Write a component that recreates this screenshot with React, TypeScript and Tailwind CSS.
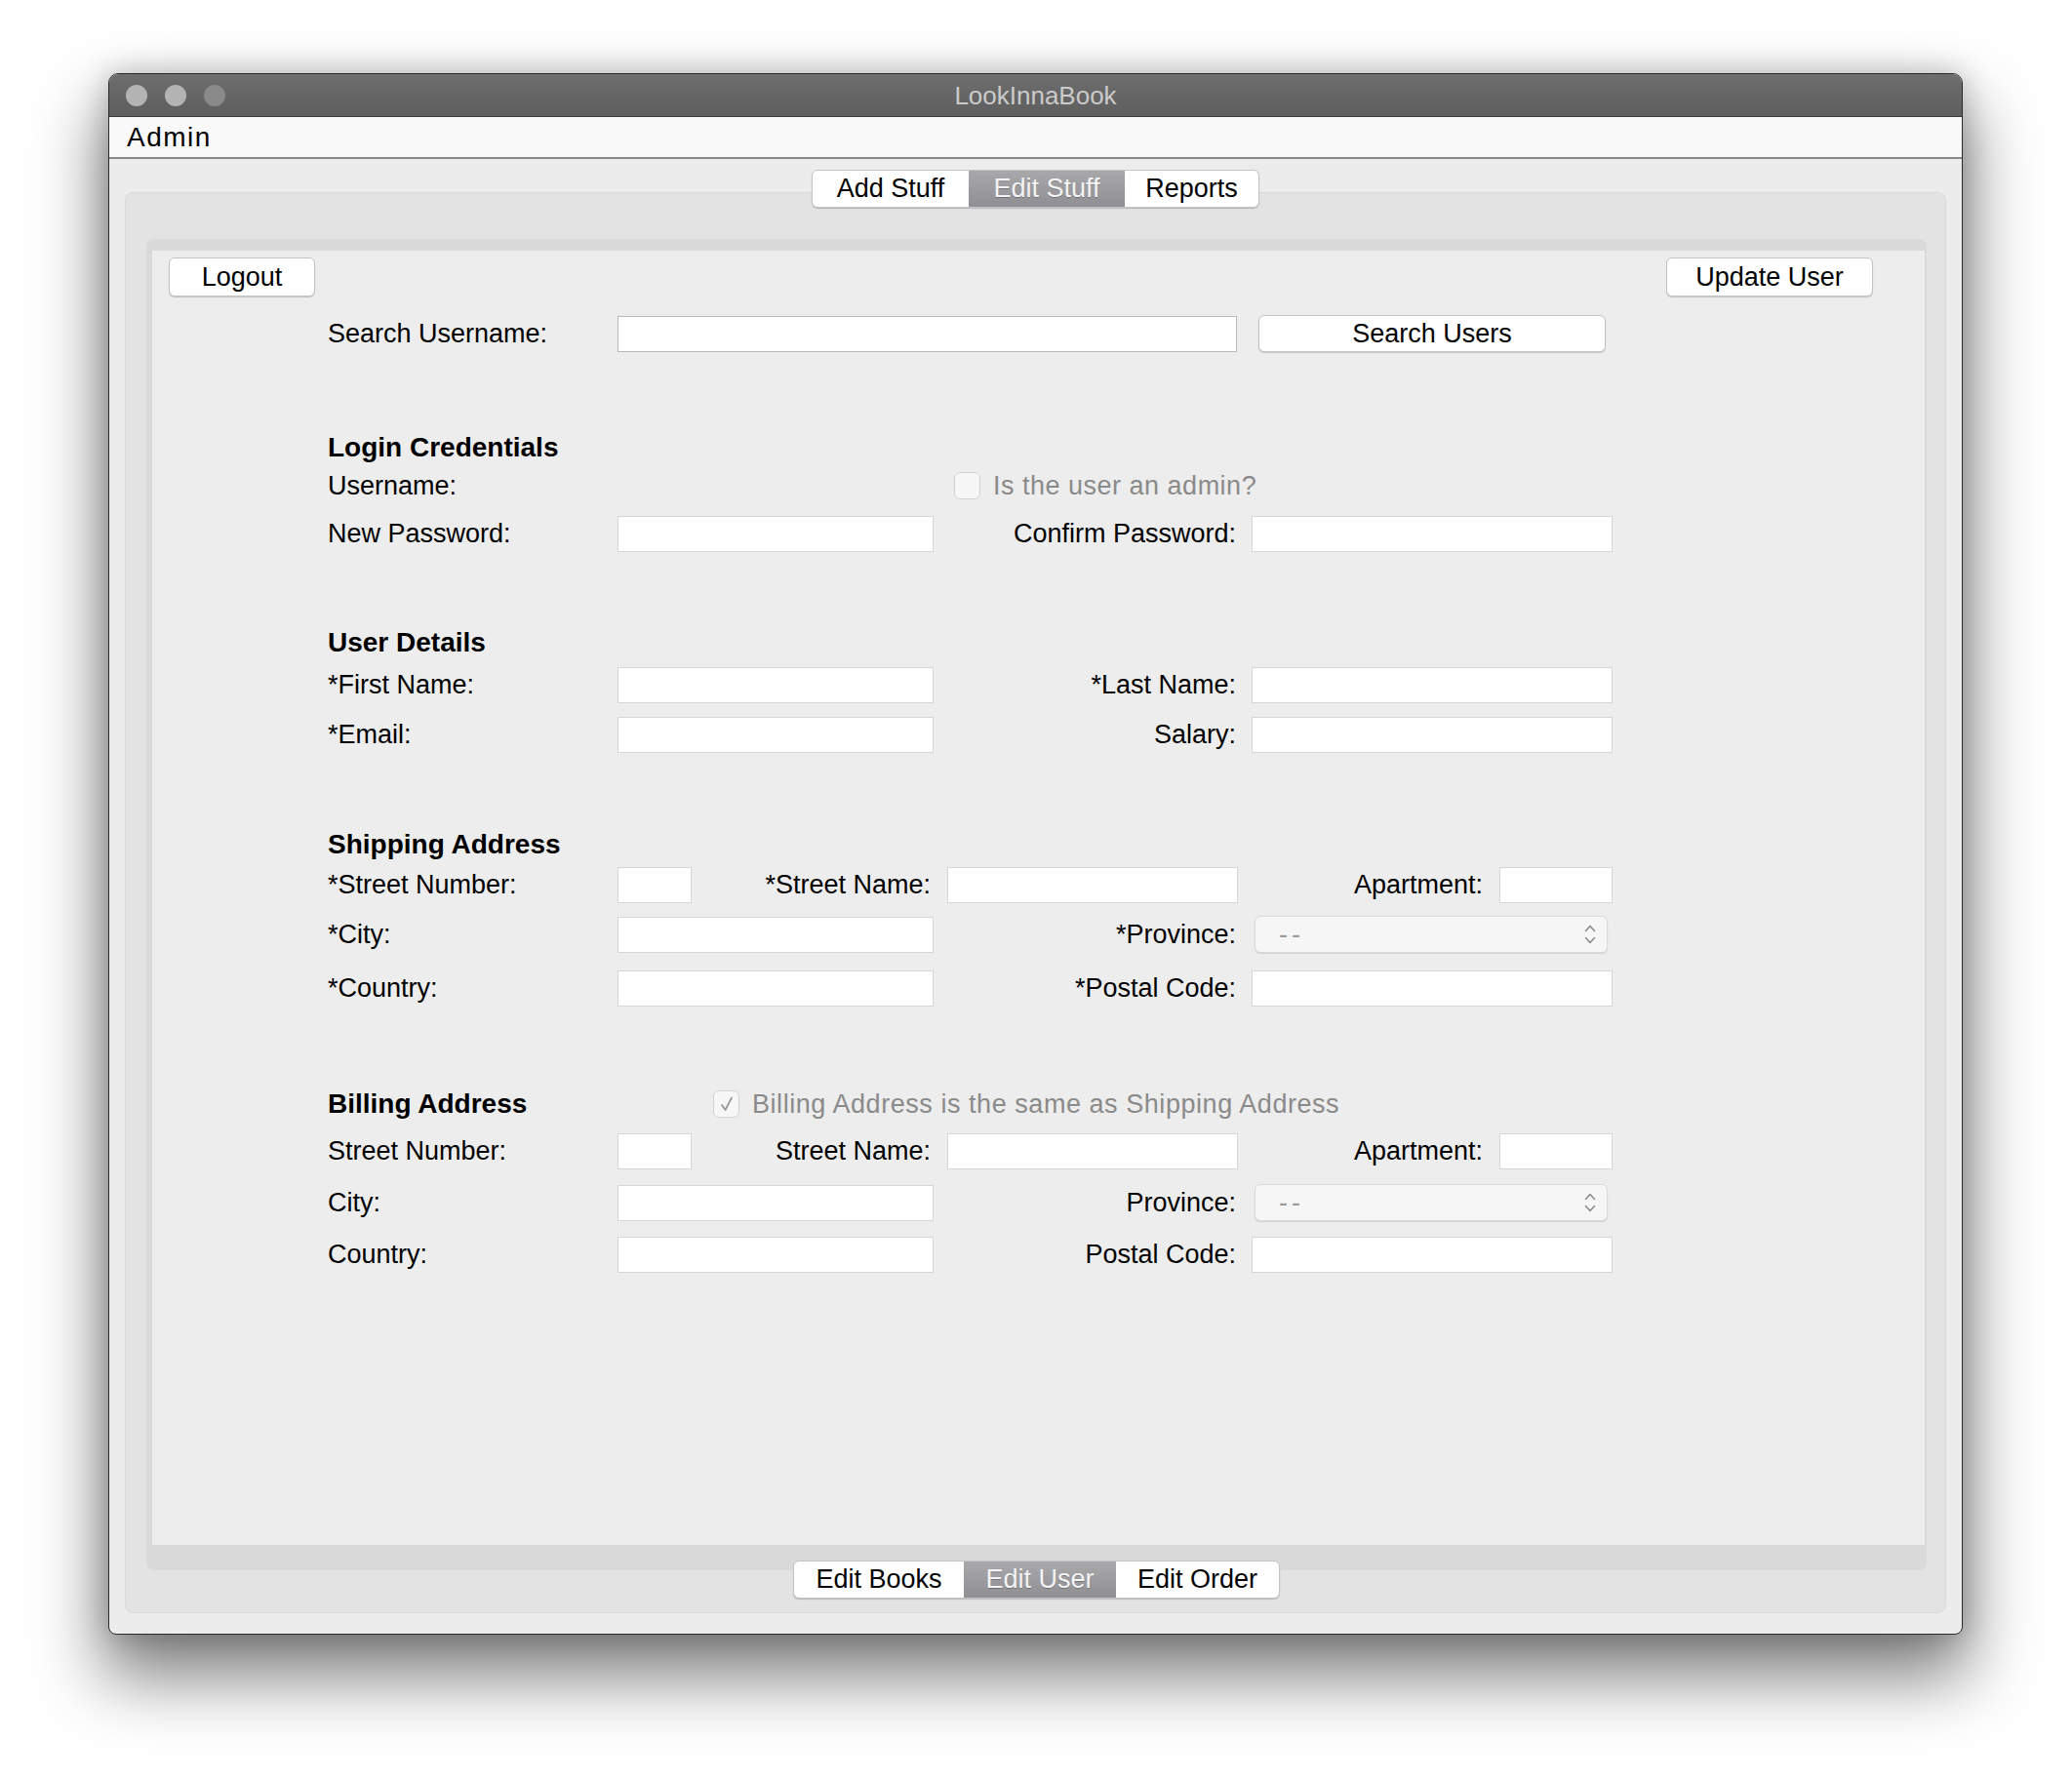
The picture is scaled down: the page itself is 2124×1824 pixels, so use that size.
import React from 'react';

// Java Swing "Aqua" look: LookInnaBook admin window, Edit Stuff > Edit User

function Field({ w, dark }: { w: string; dark?: boolean }) {
  return (
    <div
      className={`${w} h-[37px] shrink-0 bg-white border ${
        dark ? 'border-[#b9b9b9]' : 'border-[#d6d6d6]'
      }`}
    />
  );
}

function Combo() {
  return (
    <div className="w-[362px] h-[38px] shrink-0 ml-[19px] flex items-center justify-between pl-[24px] pr-[10px] rounded-[6px] bg-[#f6f6f6] border border-[#dadada] shadow-[0_1px_1px_rgba(0,0,0,0.12)]">
      <span className="text-[#9a9a9a] tracking-[4px]">--</span>
      <svg width="14" height="24" viewBox="0 0 14 24" fill="none" stroke="#8c8c8c" strokeWidth="1.6" strokeLinecap="round" strokeLinejoin="round">
        <path d="M2.5 8.5 L7 3.5 L11.5 8.5" />
        <path d="M2.5 15.5 L7 20.5 L11.5 15.5" />
      </svg>
    </div>
  );
}

function CheckBox({ checked }: { checked?: boolean }) {
  return (
    <div className="w-[27px] h-[28px] shrink-0 rounded-[6px] border border-[#d2d2d2] bg-[#f7f7f7] flex items-center justify-center">
      {checked && (
        <svg width="16" height="18" viewBox="0 0 16 18" fill="none" stroke="#9a9a9a" strokeWidth="1.8" strokeLinecap="round" strokeLinejoin="round">
          <path d="M3 10 L6.5 15 L13 2.5" />
        </svg>
      )}
    </div>
  );
}

function Button({ label, w }: { label: string; w: string }) {
  return (
    <div
      className={`${w} h-[40px] shrink-0 flex items-center justify-center bg-white rounded-[6px] border border-[#c3c3c3] shadow-[0_1px_1px_rgba(0,0,0,0.18)]`}
    >
      {label}
    </div>
  );
}

function Segments({ items, active }: { items: [string, string][]; active: number }) {
  return (
    <div className="flex h-[39px] rounded-[6px] border border-[#c4c4c4] bg-white overflow-hidden shadow-[0_1px_1px_rgba(0,0,0,0.2)]">
      {items.map(([label, w], i) => (
        <div
          key={label}
          className={`${w} flex items-center justify-center ${
            i === active
              ? 'bg-gradient-to-b from-[#a9a9ac] to-[#8f8f93] text-[#f4f4f4] [text-shadow:0_1px_0_rgba(0,0,0,0.25)]'
              : 'text-black'
          }`}
        >
          {label}
        </div>
      ))}
    </div>
  );
}

function Label({ children }: { children: React.ReactNode }) {
  return <span className="w-[297px] shrink-0">{children}</span>;
}

function Heading({ mt, children }: { mt: string; children: React.ReactNode }) {
  return (
    <div className={`h-[30px] flex items-center font-bold text-[28px] ${mt}`}>{children}</div>
  );
}

function TwoCol({
  mt,
  left,
  right,
  rightEl,
}: {
  mt: string;
  left: string;
  right: string;
  rightEl?: React.ReactNode;
}) {
  return (
    <div className={`h-[38px] flex items-center ${mt}`}>
      <Label>{left}</Label>
      <Field w="w-[324px]" />
      <span className="w-[310px] shrink-0 text-right">{right}</span>
      {rightEl ?? (
        <div className="ml-[16px]">
          <Field w="w-[370px]" />
        </div>
      )}
    </div>
  );
}

function StreetRow({ mt, req }: { mt: string; req: boolean }) {
  return (
    <div className={`h-[38px] flex items-center ${mt}`}>
      <Label>{req ? '*Street Number:' : 'Street Number:'}</Label>
      <Field w="w-[76px]" />
      <span className="w-[262px] shrink-0 text-right pr-[17px]">
        {req ? '*Street Name:' : 'Street Name:'}
      </span>
      <Field w="w-[298px]" />
      <span className="w-[268px] shrink-0 text-right pr-[17px]">Apartment:</span>
      <Field w="w-[116px]" />
    </div>
  );
}

export default function App() {
  return (
    <div className="w-[2124px] h-[1824px] bg-white pl-[111px] pt-[75px] font-['Liberation_Sans',Arial,sans-serif] text-[27px] leading-none text-black">
      <div className="w-[1901px] h-[1601px] flex flex-col rounded-t-[10px] rounded-b-[8px] border border-[#2a2a2a] bg-[#ececec] overflow-hidden shadow-[0_38px_70px_6px_rgba(0,0,0,0.5),0_0_30px_rgba(0,0,0,0.22)]">
        {/* title bar */}
        <div className="h-[44px] shrink-0 relative flex items-center bg-gradient-to-b from-[#6e6e6e] to-[#5e5e5e] border-b border-[#3c3c3c]">
          <div className="flex items-center gap-[18px] pl-[17px]">
            <div className="w-[22px] h-[22px] rounded-full bg-[#b3b3b3]" />
            <div className="w-[22px] h-[22px] rounded-full bg-[#b3b3b3]" />
            <div className="w-[22px] h-[22px] rounded-full bg-[#8a8a8a]" />
          </div>
          <div className="absolute inset-0 flex items-center justify-center text-[26px] text-[#cbcbcb]">
            LookInnaBook
          </div>
        </div>

        {/* menu bar */}
        <div className="h-[43px] shrink-0 flex items-center pl-[18px] bg-[#f9f9f9] border-b-2 border-[#8a8a8a] text-[28px] tracking-[1.5px]">
          Admin
        </div>

        {/* body */}
        <div className="flex-1 flex flex-col px-[16px] pt-[11px] pb-[21px]">
          <div className="h-[38px] flex justify-center relative z-10">
            <Segments
              active={1}
              items={[
                ['Add Stuff', 'w-[160px]'],
                ['Edit Stuff', 'w-[160px]'],
                ['Reports', 'w-[137px]'],
              ]}
            />
          </div>

          {/* outer tab panel */}
          <div className="flex-1 -mt-[15px] flex flex-col rounded-[8px] bg-[#e3e3e3] border border-[#dadada] pt-[47px] pl-[21px] pr-[19px] pb-[13px]">
            {/* inner tab panel */}
            <div className="flex-1 flex flex-col rounded-[7px] bg-[#dadada] pt-[12px] pl-[6px] pr-[2px] pb-[26px]">
              <div className="flex-1 flex flex-col bg-[#ededed] pt-[7px]">
                <div className="flex justify-between pl-[17px] pr-[53px]">
                  <Button label="Logout" w="w-[150px]" />
                  <Button label="Update User" w="w-[212px]" />
                </div>

                <div className="flex flex-col pl-[180px]">
                  <div className="h-[38px] flex items-center mt-[19px]">
                    <Label>Search Username:</Label>
                    <Field w="w-[635px]" dark />
                    <div className="ml-[22px] w-[356px] h-[38px] flex items-center justify-center bg-white rounded-[6px] border border-[#c3c3c3] shadow-[0_1px_1px_rgba(0,0,0,0.18)]">
                      Search Users
                    </div>
                  </div>

                  <Heading mt="mt-[83px]">Login Credentials</Heading>
                  <div className="h-[38px] flex items-center mt-[5px]">
                    <Label>Username:</Label>
                    <div className="ml-[345px] flex items-center">
                      <CheckBox />
                      <span className="ml-[13px] text-[#8a8a8a] tracking-[0.5px]">
                        Is the user an admin?
                      </span>
                    </div>
                  </div>
                  <TwoCol mt="mt-[11px]" left="New Password:" right="Confirm Password:" />

                  <Heading mt="mt-[78px]">User Details</Heading>
                  <TwoCol mt="mt-[9px]" left="*First Name:" right="*Last Name:" />
                  <TwoCol mt="mt-[13px]" left="*Email:" right="Salary:" />

                  <Heading mt="mt-[79px]">Shipping Address</Heading>
                  <StreetRow mt="mt-[7px]" req />
                  <TwoCol mt="mt-[13px]" left="*City:" right="*Province:" rightEl={<Combo />} />
                  <TwoCol mt="mt-[17px]" left="*Country:" right="*Postal Code:" />

                  <div className="h-[30px] flex items-center mt-[85px]">
                    <span className="w-[395px] shrink-0 font-bold text-[28px]">Billing Address</span>
                    <CheckBox checked />
                    <span className="ml-[13px] text-[#8a8a8a] tracking-[0.55px]">
                      Billing Address is the same as Shipping Address
                    </span>
                  </div>
                  <StreetRow mt="mt-[14px]" req={false} />
                  <TwoCol mt="mt-[15px]" left="City:" right="Province:" rightEl={<Combo />} />
                  <TwoCol mt="mt-[15px]" left="Country:" right="Postal Code:" />
                </div>
              </div>
            </div>

            <div className="h-[40px] -mt-[10px] flex justify-center relative z-10">
              <Segments
                active={1}
                items={[
                  ['Edit Books', 'w-[174px]'],
                  ['Edit User', 'w-[156px]'],
                  ['Edit Order', 'w-[167px]'],
                ]}
              />
            </div>
          </div>
        </div>
      </div>
    </div>
  );
}
